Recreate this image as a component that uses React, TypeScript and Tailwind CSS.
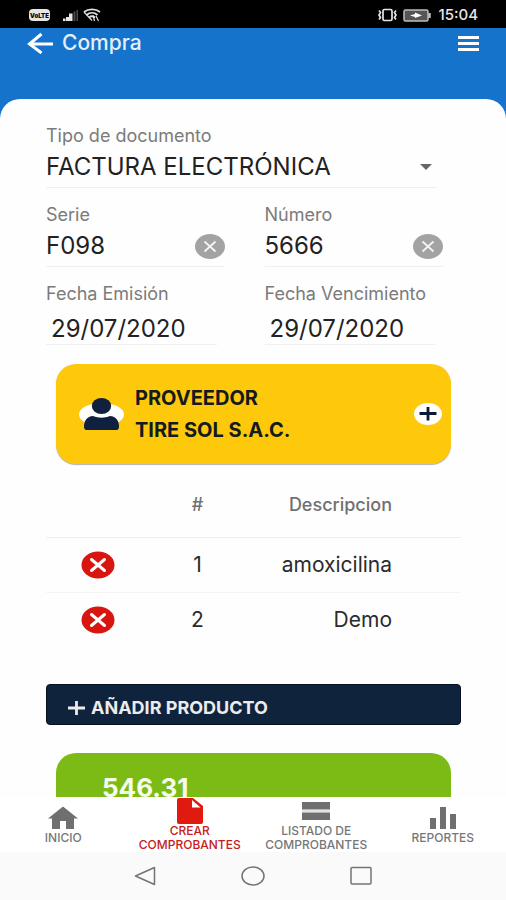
import type { ReactNode } from "react";

function StatusBar() {
  return (
    <div className="flex h-7 shrink-0 items-center justify-between bg-black pl-[29px] pr-7 text-[#e6e6e6]">
      <div className="flex items-center gap-3 pt-0.5">
        <span className="flex h-3 w-[21px] items-center justify-center rounded-sm bg-[#e6e6e6] text-[6px] font-black text-black">
          VoLTE
        </span>
        <div className="flex items-center gap-1">
          <svg width="17" height="13" viewBox="0 0 17 13" aria-hidden="true">
            <path d="M1 12V9.500h2.500V12zM4 12V8h3v4zM7 12V4.500h3.500V12z" fill="#e6e6e6" />
            <path d="M11.500 12V2.500h2V12zM14.500 12V1H16v11z" fill="#4a4a4a" />
          </svg>
          <svg width="18" height="14" viewBox="0 0 18 14" fill="none" stroke="#e0e0e0" strokeWidth="1.800" aria-hidden="true">
            <path d="M1 4C5.500.500 12.500.500 17 4M3.500 7c3.300-2.800 7.700-2.800 11 0M6 9.500c1.800-1.500 4.200-1.500 6 0" />
            <path d="M1 4l8 8.500M10 7.500l1.500 5.500M13 8l2.500 5" strokeWidth="1.200" />
          </svg>
        </div>
      </div>
      <div className="flex items-center gap-1.5 pt-0.5">
        <svg width="19" height="14" viewBox="0 0 19 14" fill="none" stroke="#e6e6e6" strokeWidth="1.700" aria-hidden="true">
          <rect x="5" y="1.500" width="9" height="11" rx="1.500" />
          <path d="M1 2.500l1.500 2L1 7l1.500 2.500L1 11.500M18 2.500l-1.500 2L18 7l-1.500 2.500 1.500 2" />
        </svg>
        <svg width="29" height="13" viewBox="0 0 29 13" aria-hidden="true">
          <rect x="1" y="1" width="24" height="11" rx="1.500" fill="#555" stroke="#bdbdbd" strokeWidth="1.500" />
          <path d="M26.500 4v5" stroke="#bdbdbd" strokeWidth="2.500" />
          <path d="M7 6.500l5-1.500V3.500l7 3-7 2.500V8z" fill="#fff" />
        </svg>
        <span className="text-[15px] font-medium leading-5">15:04</span>
      </div>
    </div>
  );
}

function Header() {
  return (
    <header className="flex items-center justify-between px-[27px]">
      <div className="flex items-center gap-[9px]">
        <button type="button" aria-label="Volver">
          <svg width="26" height="22" viewBox="0 0 26 22" fill="none" stroke="#fff" strokeWidth="3" aria-hidden="true">
            <path d="M26 12H2.500M14.500 2L2.500 12l12 9" />
          </svg>
        </button>
        <h1 className="text-[21px] font-medium leading-[30px] text-[#e4effa]">Compra</h1>
      </div>
      <button type="button" aria-label="Menú" className="flex w-[21px] flex-col gap-[3px]">
        <span className="h-[3px] bg-white" />
        <span className="h-[3px] bg-white" />
        <span className="h-[3px] bg-white" />
      </button>
    </header>
  );
}

const labelClass = "block text-[18px] leading-[22px] text-[#7b7b7b]";
const inputClass = "bg-transparent text-[24px] text-[#222] outline-none";

function ClearableField({ id, label, value }: { id: string; label: string; value: string }) {
  return (
    <div>
      <label htmlFor={id} className={labelClass}>
        {label}
      </label>
      <div className="flex h-[41px] items-center border-b border-[#f0f0f0]">
        <input id={id} defaultValue={value} className={`${inputClass} min-w-0 flex-1`} />
        <button type="button" aria-label={`Borrar ${label}`}>
          <svg width="30" height="25" viewBox="0 0 30 25" aria-hidden="true">
            <ellipse cx="15" cy="12.500" rx="15" ry="12.500" fill="#a3a3a3" />
            <path d="M9.500 7.500l11 10M20.500 7.500l-11 10" stroke="#f4f4f4" strokeWidth="1.800" />
          </svg>
        </button>
      </div>
    </div>
  );
}

function DateField({ id, label, value }: { id: string; label: string; value: string }) {
  return (
    <div>
      <label htmlFor={id} className={`${labelClass} whitespace-nowrap`}>
        {label}
      </label>
      <div className="mr-2 flex h-10 items-center border-b border-[#f0f0f0] pt-2 pl-[5px]">
        <input id={id} defaultValue={value} className={`${inputClass} w-[138px]`} />
      </div>
    </div>
  );
}

function Supplier() {
  return (
    <section className="mx-2.5 mt-[19px] flex items-center rounded-[20px] bg-[#fdc90a] py-[18px] pl-[23px] pr-[9px] shadow-[0_1px_1px_rgba(0,0,0,0.3)]">
      <svg width="45" height="34" viewBox="0 0 45 34" aria-hidden="true">
        <ellipse cx="22.500" cy="17.500" rx="22.500" ry="11.500" fill="#fff" />
        <path d="M5 29.500C5 23.500 8 19.500 14 19c5.500 2.300 11.500 2.300 17 0 6 .500 9 4.500 9 10.500 0 2-.800 3.500-2.500 3.500h-30C5.800 33 5 31.500 5 29.500z" fill="#10213f" />
        <ellipse cx="22.500" cy="9" rx="9.700" ry="8" fill="#10213f" />
      </svg>
      <div className="ml-[11px] flex-1 text-[20px] font-bold leading-8 text-[#141a20]">
        <h2>PROVEEDOR</h2>
        <p>TIRE SOL S.A.C.</p>
      </div>
      <button type="button" aria-label="Agregar proveedor">
        <svg width="28" height="22" viewBox="0 0 28 22" aria-hidden="true">
          <ellipse cx="14" cy="11" rx="14" ry="11" fill="#fff" />
          <path d="M5.500 10.500h17M14 4v13.500" stroke="#0b1838" strokeWidth="2.800" />
        </svg>
      </button>
    </section>
  );
}

const products = [
  { id: 1, name: "amoxicilina" },
  { id: 2, name: "Demo" },
];

function Products() {
  return (
    <table className="mt-2 w-full table-fixed border-collapse text-[#2b2b2b]">
      <thead>
        <tr className="h-[65px] border-b border-[#ededed] text-[18px] text-[#707070]">
          <th className="w-1/4" aria-label="Eliminar" />
          <th className="w-[23%] font-medium">#</th>
          <th className="pr-[69px] text-right font-medium">Descripcion</th>
        </tr>
      </thead>
      <tbody className="text-[21px]">
        {products.map((product) => (
          <tr key={product.id} className="h-[55px] border-b border-[#f5f5f5] last:border-b-0">
            <td className="text-center">
              <button type="button" aria-label={`Eliminar ${product.name}`} className="mx-auto block">
                <svg width="34" height="28" viewBox="0 0 34 28" aria-hidden="true">
                  <ellipse cx="17" cy="14" rx="16.500" ry="13.500" fill="#d8150f" />
                  <path d="M10.500 8.500l13 11M23.500 8.500l-13 11" stroke="#fff" strokeWidth="3" strokeLinecap="round" />
                </svg>
              </button>
            </td>
            <td className="text-center">{product.id}</td>
            <td className="pr-[69px] text-right">{product.name}</td>
          </tr>
        ))}
      </tbody>
    </table>
  );
}

function NavItem({ label, active, children }: { label: string; active?: boolean; children: ReactNode }) {
  return (
    <a
      href="#"
      className={`flex flex-col items-center justify-center text-center text-[12px] font-medium leading-[14px] ${
        active ? "text-[#c5201b]" : "text-[#777]"
      }`}
    >
      <span className="flex h-[27px] items-center">{children}</span>
      <span>{label}</span>
    </a>
  );
}

function BottomNav() {
  return (
    <nav className="grid h-[55px] shrink-0 grid-cols-4 bg-white">
      <NavItem label="INICIO">
        <svg width="32" height="24" viewBox="0 0 32 24" fill="#6f6f6f" aria-hidden="true">
          <path d="M16 0.500L1 12.500h4V23h8v-8h6v8h8V12.500h4z" />
        </svg>
      </NavItem>
      <NavItem label="CREAR COMPROBANTES" active>
        <svg width="26" height="27" viewBox="0 0 26 27" aria-hidden="true">
          <path d="M2 1h14l10 8v16c0 1-.700 2-2 2H2c-1.300 0-2-1-2-2V3c0-1 .700-2 2-2z" fill="#e01a0e" />
          <path d="M15 3v7.500h8.500z" fill="#fff" />
        </svg>
      </NavItem>
      <NavItem label="LISTADO DE COMPROBANTES">
        <svg width="28" height="18" viewBox="0 0 28 18" fill="#6f6f6f" aria-hidden="true">
          <path d="M0 0h28v7.500H0zM0 10.500h28V18H0z" />
          <path d="M0 8.500h28v1H0z" fill="#c4c4c4" />
        </svg>
      </NavItem>
      <NavItem label="REPORTES">
        <svg width="28" height="22" viewBox="0 0 28 22" fill="#6f6f6f" aria-hidden="true">
          <path d="M1 11h6v11H1zM11 0h6v22h-6zM21 7h6v15h-6z" />
        </svg>
      </NavItem>
    </nav>
  );
}

function SystemNav() {
  return (
    <div className="flex h-12 shrink-0 items-center justify-center gap-[85px] bg-[#fafafa]">
      <button type="button" aria-label="Atrás">
        <svg width="22" height="20" viewBox="0 0 22 20" fill="none" stroke="#747474" strokeWidth="1.500" aria-hidden="true">
          <path d="M20.500 1.500v17L1.500 10z" strokeLinejoin="round" />
        </svg>
      </button>
      <button type="button" aria-label="Inicio del sistema">
        <svg width="24" height="20" viewBox="0 0 24 20" fill="none" stroke="#747474" strokeWidth="1.500" aria-hidden="true">
          <ellipse cx="12" cy="10" rx="11" ry="9" />
        </svg>
      </button>
      <button type="button" aria-label="Recientes">
        <svg width="22" height="20" viewBox="0 0 22 20" fill="none" stroke="#747474" strokeWidth="1.500" aria-hidden="true">
          <rect x="1" y="1.500" width="20" height="16.500" rx="1" />
        </svg>
      </button>
    </div>
  );
}

export default function App() {
  return (
    <div className="flex h-screen flex-col overflow-hidden bg-white font-['Inter','Roboto',sans-serif]">
      <StatusBar />
      <div className="flex min-h-0 flex-1 flex-col bg-[#1673cb]">
        <Header />
        <main className="mt-[41px] min-h-0 flex-1 overflow-hidden rounded-t-[20px] bg-[#fefefe] pr-[45px] pl-[46px] pt-[26px]">
          <form className="mr-[18px]">
            <label htmlFor="tipo" className={labelClass}>
              Tipo de documento
            </label>
            <div className="mr-1.5 flex h-[41px] items-center border-b border-[#f0f0f0] pr-[5px]">
              <select id="tipo" className={`${inputClass} min-w-0 flex-1 appearance-none`}>
                <option>FACTURA ELECTRÓNICA</option>
              </select>
              <svg width="12" height="6" viewBox="0 0 12 6" fill="#666" aria-hidden="true">
                <path d="M0 0h12L6 6z" />
              </svg>
            </div>
            <div className="mt-4 grid grid-cols-2 gap-x-10 gap-y-4">
              <ClearableField id="serie" label="Serie" value="F098" />
              <ClearableField id="numero" label="Número" value="5666" />
              <DateField id="emision" label="Fecha Emisión" value="29/07/2020" />
              <DateField id="vencimiento" label="Fecha Vencimiento" value="29/07/2020" />
            </div>
          </form>
          <Supplier />
          <Products />
          <button
            type="button"
            className="mt-[37px] flex h-[41px] w-full items-center gap-1.5 rounded-[4px] border border-[#06101f] bg-[#10233d] pt-1.5 pl-[21px] text-[18px] font-bold text-[#ececec]"
          >
            <svg width="17" height="14" viewBox="0 0 17 14" stroke="#ececec" strokeWidth="2.800" aria-hidden="true">
              <path d="M0 7h17M8.500 0v14" />
            </svg>
            AÑADIR PRODUCTO
          </button>
          <section className="mx-2.5 mt-7 h-24 rounded-[20px] bg-[#7cbb15] pt-5 pl-[46px]">
            <p className="text-[26px] font-bold leading-[30px] text-[#f6fbef]">546.31</p>
          </section>
        </main>
      </div>
      <BottomNav />
      <SystemNav />
    </div>
  );
}
